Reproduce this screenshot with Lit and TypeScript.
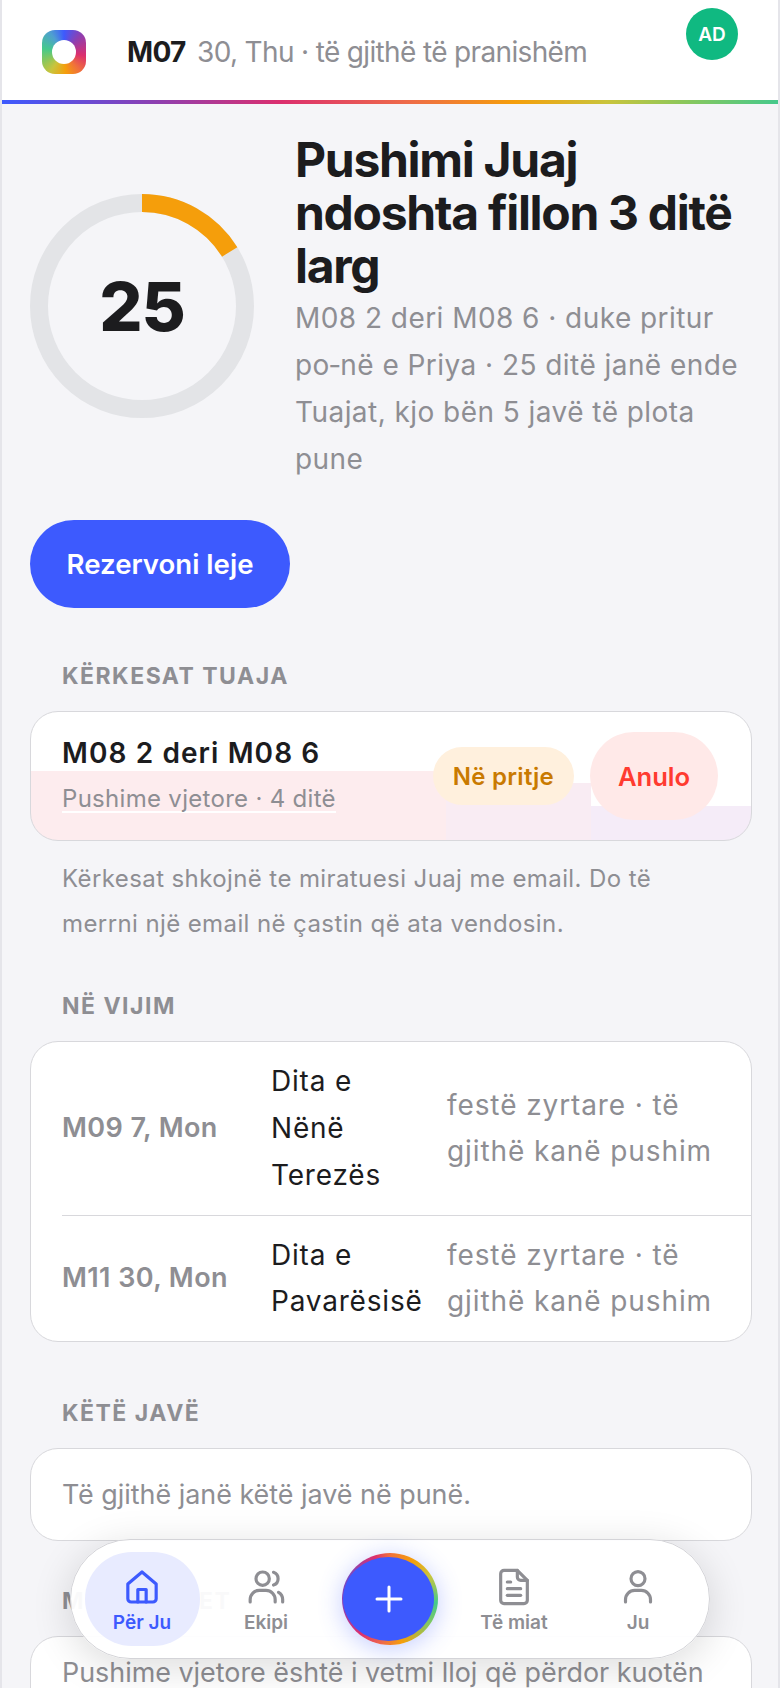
import { LitElement, html, css, svg } from 'lit';
import { customElement } from 'lit/decorators.js';

const ICONS = {
    home: svg`<path d="M3.5 10.2 12 3l8.5 7.2V19a2 2 0 0 1-2 2h-13a2 2 0 0 1-2-2z"/><path d="M9.5 21v-7.5h5V21"/>`,
    team: svg`<circle cx="10" cy="7" r="4"/><path d="M2.5 21v-1.5a5.5 5.5 0 0 1 5.5-5.5h4a5.5 5.5 0 0 1 5.5 5.5V21"/><path d="M22 21v-1.5a5 5 0 0 0-2.5-4.3"/><path d="M16.5 3.2a4 4 0 0 1 0 7.6"/>`,
    doc: svg`<path d="M14 2H6a2 2 0 0 0-2 2v16a2 2 0 0 0 2 2h12a2 2 0 0 0 2-2V8z"/><path d="M14 2v4a2 2 0 0 0 2 2h4"/><path d="M16 13H8"/><path d="M16 17H8"/><path d="M10 9H8"/>`,
    user: svg`<circle cx="12" cy="7" r="4.2"/><path d="M4.5 21v-1.5a5.5 5.5 0 0 1 5.5-5.5h4a5.5 5.5 0 0 1 5.5 5.5V21"/>`,
};

const HOLIDAYS = [
    { date: 'M09 7, Mon', name: 'Dita e Nënë Terezës', note: 'festë zyrtare · të gjithë kanë pushim' },
    { date: 'M11 30, Mon', name: 'Dita e Pavarësisë', note: 'festë zyrtare · të gjithë kanë pushim' },
];

const NAV_LEFT = [
    { icon: ICONS.home, label: 'Për Ju', active: true },
    { icon: ICONS.team, label: 'Ekipi', active: false },
];

const NAV_RIGHT = [
    { icon: ICONS.doc, label: 'Të miat', active: false },
    { icon: ICONS.user, label: 'Ju', active: false },
];

@customElement('app-root')
export class AppRoot extends LitElement {
    static override styles = css`
        :host {
            display: block;
            position: relative;
            box-sizing: border-box;
            width: 780px;
            height: 1688px;
            overflow: hidden;
            background: #f5f5f8;
            border-left: 2px solid #e5e5ea;
            border-right: 2px solid #e5e5ea;
            font-family: Inter, "Liberation Sans", sans-serif;
            color: #1c1c1e;
        }

        .top {
            display: flex;
            align-items: center;
            height: 100px;
            padding: 0 40px;
            background: #fff;
            box-sizing: border-box;
        }

        .logo {
            display: flex;
            align-items: center;
            justify-content: center;
            width: 44px;
            height: 44px;
            margin-top: 4px;
            border-radius: 13px;
            background: conic-gradient(#3d5afe, #8e3fb0 45deg, #dc2f6e 100deg, #f0703c 140deg, #f59e0b 175deg, #c9c43c 215deg, #8ac75c 245deg, #45c98c 280deg, #4f9fd0 325deg, #3d5afe);
        }

        .logo-hole {
            width: 24px;
            height: 24px;
            border-radius: 50%;
            background: #fff;
        }

        .top-title {
            flex: 1;
            margin: 4px 0 0 41px;
            font-size: 28px;
            letter-spacing: -0.65px;
            color: #8e8e93;
            white-space: nowrap;
        }

        .top-title b {
            font-weight: 700;
            color: #1c1c1e;
            margin-right: 4px;
        }

        .avatar {
            display: flex;
            align-items: center;
            justify-content: center;
            align-self: flex-start;
            width: 52px;
            height: 52px;
            margin-top: 8px;
            border-radius: 50%;
            background: #10b981;
            color: #fff;
            font-size: 19px;
            font-weight: 600;
        }

        .stripe {
            height: 4px;
            background: linear-gradient(90deg, #3d5afe, #8e3fb0 20%, #dc2f6e 36%, #ee6a4a 52%, #f59e0b 66%, #c9c43c 78%, #8ac75c 88%, #45c98c);
        }

        main {
            padding: 30px 26px 0 28px;
        }

        .hero {
            display: flex;
            align-items: center;
            gap: 41px;
        }

        .ring {
            position: relative;
            flex-shrink: 0;
            width: 224px;
            height: 224px;
            margin-bottom: 5px;
        }

        .ring svg {
            display: block;
            transform: rotate(-90deg);
        }

        .ring-value {
            position: absolute;
            inset: 0;
            display: flex;
            align-items: center;
            justify-content: center;
            font-size: 68px;
            font-weight: 800;
            letter-spacing: -1px;
        }

        h1 {
            margin: 0;
            font-size: 48px;
            line-height: 52.8px;
            font-weight: 700;
            letter-spacing: -1.3px;
        }

        .hero-sub {
            margin: 3px 0 0;
            font-size: 28px;
            line-height: 46.7px;
            color: #8e8e93;
            letter-spacing: 0.45px;
        }

        .book {
            display: block;
            width: 260px;
            height: 88px;
            margin-top: 38px;
            border: 0;
            border-radius: 44px;
            background: #3d5afe;
            color: #fff;
            font: 600 27.6px Inter, "Liberation Sans", sans-serif;
        }

        .label {
            margin: 0 0 21px 32px;
            font-size: 23px;
            line-height: 28px;
            font-weight: 700;
            letter-spacing: 1.5px;
            color: #8e8e93;
        }

        .label-first {
            margin-top: 54px;
        }

        .label-next {
            margin-top: 46px;
        }

        .label-far {
            margin-top: 57px;
        }

        .card {
            background: #fff;
            border: 1px solid #d8d8dc;
            border-radius: 28px;
            box-sizing: border-box;
        }

        .request {
            display: flex;
            align-items: center;
            height: 130px;
            padding: 0 33px 0 31px;
            background:
                linear-gradient(#fdecee, #fdecee) left bottom / 415px 69px no-repeat,
                linear-gradient(#f9ecf3, #f9ecf3) 415px bottom / 145px 57px no-repeat,
                linear-gradient(#f5ecf8, #f5ecf8) right bottom / 162px 34px no-repeat,
                #fff;
        }

        .request-text {
            flex: 1;
            padding-bottom: 3px;
        }

        .request-title {
            font-size: 28px;
            line-height: 36px;
            font-weight: 600;
            letter-spacing: 1.1px;
        }

        .request-sub {
            margin-top: 13px;
            font-size: 24px;
            line-height: 30px;
            letter-spacing: 0.3px;
            color: #8e8e93;
        }

        .request-sub span {
            background: linear-gradient(#fff, #fff) left bottom / 100% 2px no-repeat;
        }

        .badge {
            display: flex;
            align-items: center;
            height: 58px;
            padding: 0 20px;
            border-radius: 29px;
            background: #fff0dd;
            color: #c97a00;
            font-size: 24px;
            font-weight: 600;
            letter-spacing: 0.3px;
        }

        .cancel {
            width: 128px;
            height: 88px;
            margin-left: 16px;
            border: 0;
            border-radius: 44px;
            background: #ffe9e8;
            color: #ff3b30;
            font: 600 25.6px Inter, "Liberation Sans", sans-serif;
        }

        .note {
            margin: 15px 32px 0;
            font-size: 24px;
            line-height: 45px;
            letter-spacing: 0.4px;
            color: #8e8e93;
        }

        .holiday {
            display: grid;
            grid-template-columns: 187px 154px 1fr;
            gap: 22px;
            align-items: center;
            margin-left: 31px;
            padding: 16px 0;
            font-size: 28px;
            line-height: 46.8px;
            letter-spacing: 0.8px;
        }

        .holiday + .holiday {
            border-top: 1px solid #d8d8dc;
        }

        .holiday-date {
            font-size: 27px;
            font-weight: 600;
            letter-spacing: 0.4px;
            color: #8e8e93;
        }

        .holiday-note {
            padding-right: 30px;
            color: #8e8e93;
            font-size: 28px;
            letter-spacing: 0.9px;
        }

        .plain {
            padding: 22px 31px;
            font-size: 26.9px;
            line-height: 47px;
            color: #8e8e93;
        }

        .tip {
            padding-top: 12px;
        }

        nav {
            position: absolute;
            left: 68px;
            bottom: 29px;
            display: grid;
            grid-template-columns: repeat(5, 124px);
            align-items: center;
            box-sizing: border-box;
            width: 640px;
            height: 120px;
            padding: 0 9px;
            border: 1px solid #d4d4d8;
            border-radius: 60px;
            background: rgba(255, 255, 255, 0.95);
            box-shadow: 0 8px 40px rgba(0, 0, 0, 0.14);
        }

        .tab {
            display: flex;
            flex-direction: column;
            align-items: center;
            justify-content: center;
            gap: 4px;
            box-sizing: border-box;
            width: 115px;
            height: 94px;
            margin: 0 auto;
            padding-top: 4px;
            border-radius: 47px;
            color: #8e8e93;
            font-size: 19px;
            line-height: 24px;
            font-weight: 600;
        }

        .tab svg {
            display: block;
            fill: none;
            stroke: currentColor;
            stroke-width: 1.9;
            stroke-linecap: round;
            stroke-linejoin: round;
        }

        .tab-on {
            background: #e8ebff;
            color: #3d5afe;
        }

        .fab {
            display: flex;
            box-sizing: border-box;
            width: 96px;
            height: 92px;
            margin: 0 auto;
            padding: 4px 4px 4px 1px;
            border-radius: 50%;
            background: conic-gradient(#f0703c, #f59e0b 30deg, #c9c43c 60deg, #45c98c 95deg, #8ac75c 125deg, #f59e0b 165deg, #ee6a4a 190deg, #dc2f6e 220deg, #8e3fb0 260deg, #7a48c0 300deg, #dc2f6e 340deg, #f0703c);
            box-shadow: 0 4px 24px rgba(61, 90, 254, 0.3);
        }

        .fab-inner {
            display: flex;
            flex: 1;
            align-items: center;
            justify-content: center;
            border-radius: 50%;
            background: #3d5afe;
        }

        .fab svg {
            display: block;
            fill: none;
            stroke: #fff;
            stroke-width: 3;
            stroke-linecap: round;
        }
    `;

    renderTab(tab: { icon: unknown; label: string; active: boolean }) {
        return html`
            <div class="tab ${tab.active ? 'tab-on' : ''}">
                <svg width="40" height="40" viewBox="0 0 24 24">${tab.icon}</svg>
                <span>${tab.label}</span>
            </div>
        `;
    }

    override render() {
        return html`
            <header class="top">
                <div class="logo"><div class="logo-hole"></div></div>
                <div class="top-title"><b>M07</b> 30, Thu · të gjithë të pranishëm</div>
                <div class="avatar">AD</div>
            </header>
            <div class="stripe"></div>
            <main>
                <section class="hero">
                    <div class="ring">
                        <svg width="224" height="224" viewBox="0 0 224 224" fill="none" stroke-width="18">
                            <circle cx="112" cy="112" r="103" stroke="#e3e4e7" />
                            <circle cx="112" cy="112" r="103" stroke="#f59e0b" pathLength="100" stroke-dasharray="16.2 100" />
                        </svg>
                        <div class="ring-value">25</div>
                    </div>
                    <div>
                        <h1>Pushimi Juaj ndoshta fillon 3 ditë larg</h1>
                        <p class="hero-sub">M08 2 deri M08 6 · duke pritur po‑në e Priya · 25 ditë janë ende Tuajat, kjo bën 5 javë të plota pune</p>
                    </div>
                </section>
                <button class="book">Rezervoni leje</button>

                <h2 class="label label-first">KËRKESAT TUAJA</h2>
                <div class="card request">
                    <div class="request-text">
                        <div class="request-title">M08 2 deri M08 6</div>
                        <div class="request-sub"><span>Pushime vjetore · 4 ditë</span></div>
                    </div>
                    <div class="badge">Në pritje</div>
                    <button class="cancel">Anulo</button>
                </div>
                <p class="note">Kërkesat shkojnë te miratuesi Juaj me email. Do të merrni një email në çastin që ata vendosin.</p>

                <h2 class="label label-next">NË VIJIM</h2>
                <div class="card">
                    ${HOLIDAYS.map(h => html`
                        <div class="holiday">
                            <div class="holiday-date">${h.date}</div>
                            <div>${h.name}</div>
                            <div class="holiday-note">${h.note}</div>
                        </div>
                    `)}
                </div>

                <h2 class="label label-far">KËTË JAVË</h2>
                <div class="card plain">Të gjithë janë këtë javë në punë.</div>

                <h2 class="label label-next">MIRË E DIHET</h2>
                <div class="card plain tip">Pushime vjetore është i vetmi lloj që përdor kuotën</div>
            </main>
            <nav>
                ${NAV_LEFT.map(t => this.renderTab(t))}
                <div class="fab">
                    <div class="fab-inner">
                        <svg width="28" height="28" viewBox="0 0 28 28"><path d="M14 2v24M2 14h24" /></svg>
                    </div>
                </div>
                ${NAV_RIGHT.map(t => this.renderTab(t))}
            </nav>
        `;
    }
}

declare global {
    interface HTMLElementTagNameMap {
        'app-root': AppRoot;
    }
}
